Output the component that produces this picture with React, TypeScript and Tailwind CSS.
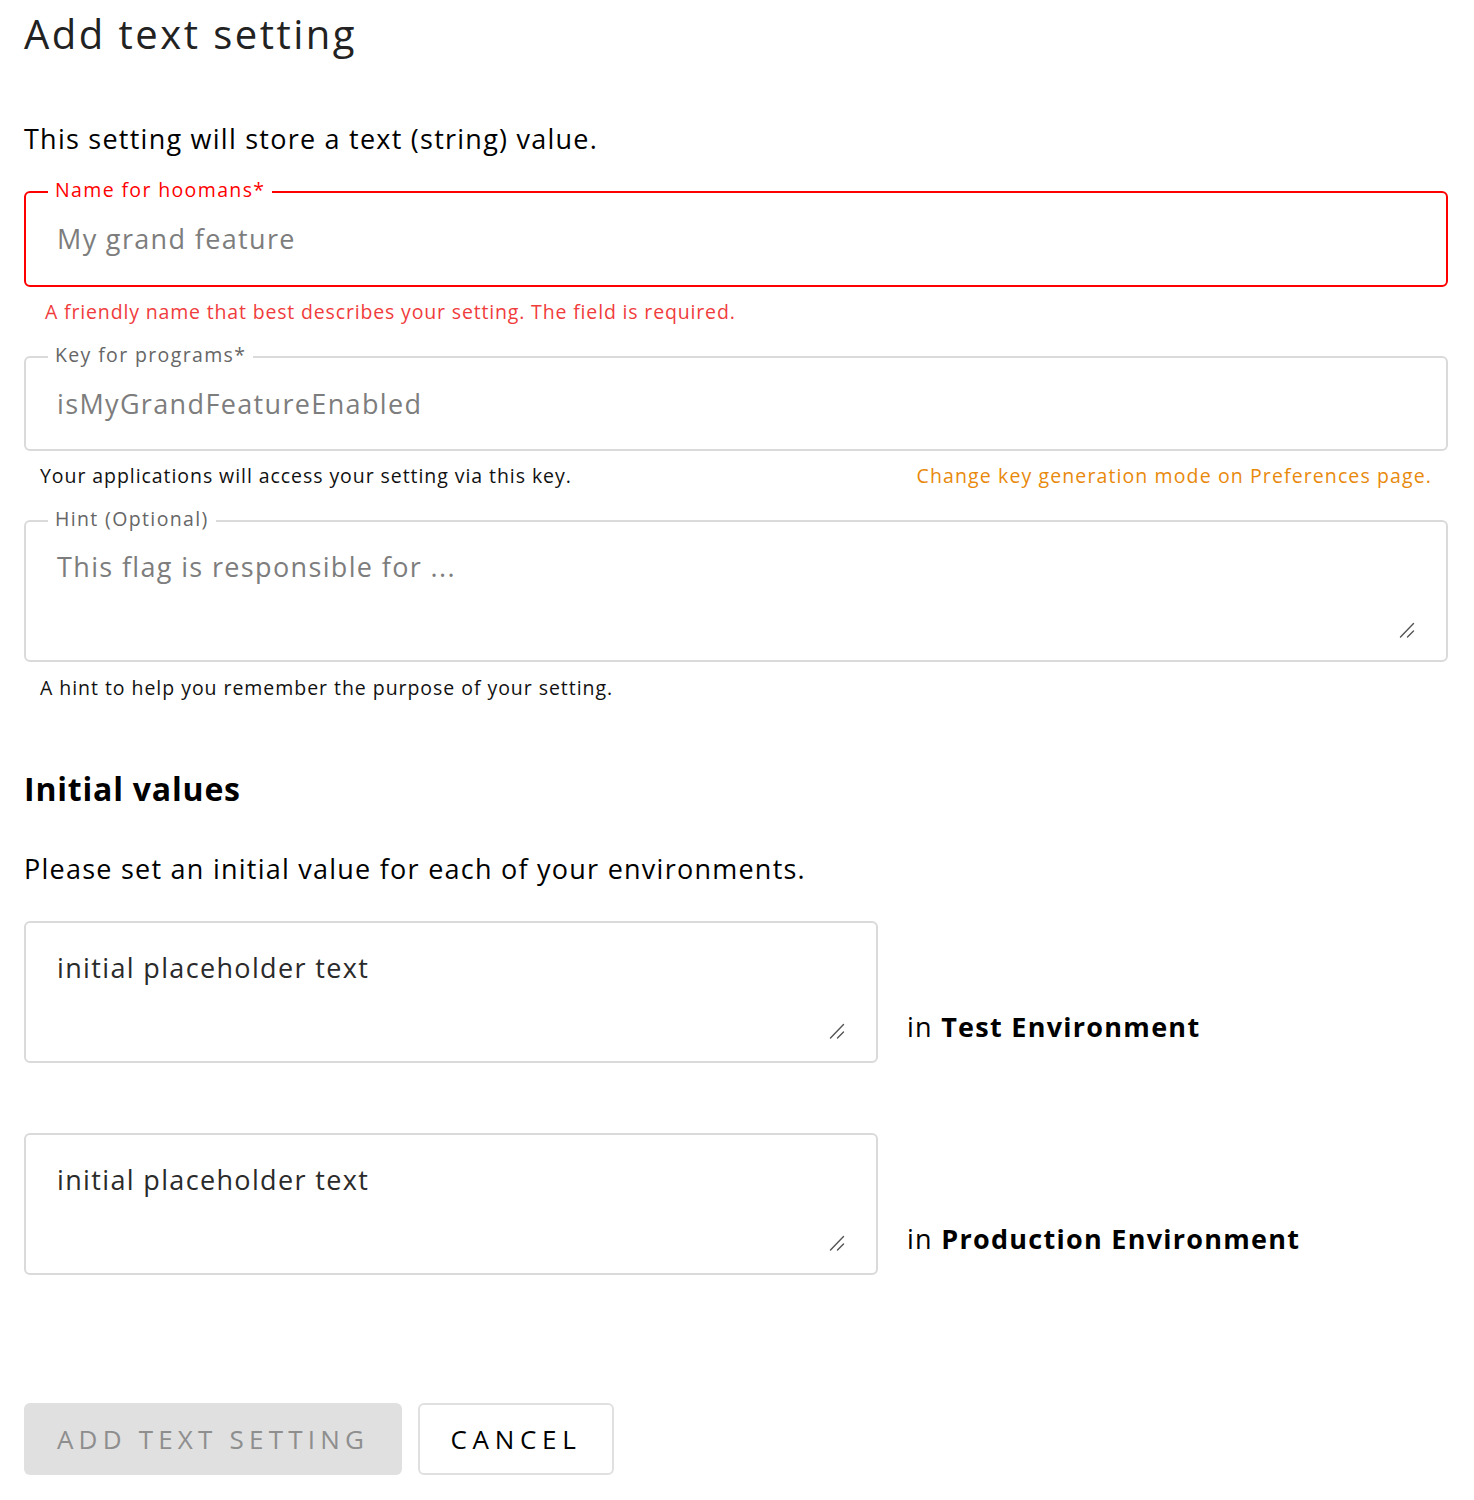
import React from "react";

const ResizeGrip: React.FC = () => (
  <svg
    width="16"
    height="16"
    viewBox="0 0 16 16"
    fill="none"
    stroke="#555"
    strokeWidth="1.4"
    strokeLinecap="round"
    className="self-end shrink-0"
  >
    <path d="M1.5 15L14.5 1.5" />
    <path d="M8.5 15L14.5 9" />
  </svg>
);

interface FieldProps {
  label?: string;
  value: string;
  error?: boolean;
  multiline?: boolean;
  dark?: boolean;
}

const Field: React.FC<FieldProps> = ({ label, value, error, multiline, dark }) => {
  const border = error ? "border-[#f00] h-[96px]" : "border-[#dadada] h-[95px]";
  const textColor = dark ? "text-[#2a2a2a]" : "text-[#7d7d7d]";
  return (
    <div
      className={
        multiline
          ? `relative flex flex-col justify-between h-[142px] rounded-[6px] border-2 border-[#dadada] pt-[25px] pb-[22px] pl-[31px] pr-[31px]`
          : `relative flex items-center rounded-[6px] border-2 ${border} px-[31px]`
      }
    >
      {label && (
        <span
          className={`absolute left-[22px] top-[-16px] bg-white px-[7px] text-[19.5px] leading-[26px] tracking-[0.07em] ${
            error ? "text-[#f00]" : "text-[#666]"
          }`}
        >
          {label}
        </span>
      )}
      <span className={`text-[27px] leading-[40px] tracking-[0.05em] ${textColor}`}>{value}</span>
      {multiline && <ResizeGrip />}
    </div>
  );
};

const EnvRow: React.FC<{ env: string }> = ({ env }) => (
  <div className="flex items-end gap-[29px]">
    <div className="w-[854px] shrink-0">
      <Field value="initial placeholder text" multiline dark />
    </div>
    <div className="pb-[16px] text-[27px] leading-[40px] tracking-[0.047em] text-black">
      in <span className="font-bold">{env}</span>
    </div>
  </div>
);

const App: React.FC = () => {
  return (
    <div className="min-h-[1500px] bg-white pl-[24px] pr-[26px] pt-[10px] font-['Open_Sans',sans-serif] text-black">
      <h1 className="text-[40px] leading-[48px] tracking-[0.062em] text-[#222]">Add text setting</h1>

      <p className="mt-[61px] text-[27px] leading-[40px] tracking-[0.046em]">
        This setting will store a text (string) value.
      </p>

      <div className="mt-[32px]">
        <Field label="Name for hoomans*" value="My grand feature" error />
        <p className="mt-[11px] pl-[21px] text-[19.5px] leading-[28px] tracking-[0.043em] text-[#f03c3c]">
          A friendly name that best describes your setting. The field is required.
        </p>
      </div>

      <div className="mt-[30px]">
        <Field label="Key for programs*" value="isMyGrandFeatureEnabled" />
        <div className="mt-[11px] flex justify-between px-[16px] text-[19.5px] leading-[28px] tracking-[0.048em]">
          <span className="text-[#111]">Your applications will access your setting via this key.</span>
          <span className="tracking-[0.057em] text-[#e8890c]">
            Change key generation mode on Preferences page.
          </span>
        </div>
      </div>

      <div className="mt-[30px]">
        <Field label="Hint (Optional)" value="This flag is responsible for ..." multiline />
        <p className="mt-[12px] px-[16px] text-[19.5px] leading-[28px] tracking-[0.049em] text-[#111]">
          A hint to help you remember the purpose of your setting.
        </p>
      </div>

      <h2 className="mt-[67px] text-[32px] leading-[40px] tracking-[0.025em] font-bold">Initial values</h2>

      <p className="mt-[40px] text-[27px] leading-[40px] tracking-[0.046em]">
        Please set an initial value for each of your environments.
      </p>

      <div className="mt-[32px] flex flex-col gap-[70px]">
        <EnvRow env="Test Environment" />
        <EnvRow env="Production Environment" />
      </div>

      <div className="mt-[128px] flex gap-[16px]">
        <button className="h-[72px] w-[378px] rounded-[6px] bg-[#e0e0e0] text-[26px] tracking-[0.2em] text-[#8e8e8e]">
          ADD TEXT SETTING
        </button>
        <button className="h-[72px] w-[196px] rounded-[6px] border-2 border-[#e0e0e0] bg-white text-[26px] tracking-[0.22em] text-black">
          CANCEL
        </button>
      </div>
    </div>
  );
};

export default App;
